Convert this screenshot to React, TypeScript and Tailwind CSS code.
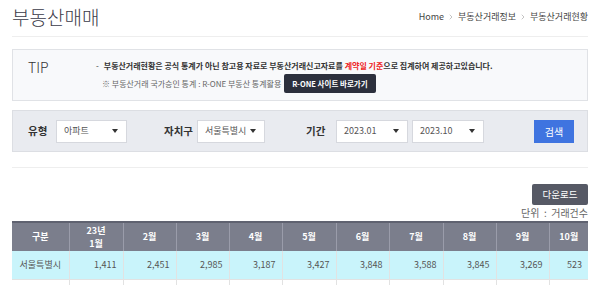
import { ChevronRight } from 'lucide-react';

const months = ['2월', '3월', '4월', '5월', '6월', '7월', '8월', '9월', '10월'];
const values = ['1,411', '2,451', '2,985', '3,187', '3,427', '3,848', '3,588', '3,845', '3,269', '523'];
const colWidths = [57, 54, 53, 53, 53, 54, 53, 54, 53, 53, 39];

const Select = ({ label, width }: { label: string; width: string }) => (
  <div
    className={`${width} h-[23px] bg-white border border-[#d6d8de] flex items-center justify-between pl-[7px] pr-[8px] text-[9px] text-[#555] whitespace-nowrap`}
  >
    <span>{label}</span>
    <span className="w-0 h-0 border-l-[3px] border-r-[3px] border-t-[4px] border-l-transparent border-r-transparent border-t-[#333]" />
  </div>
);

export default function App() {
  return (
    <div
      className="w-[600px] h-[285px] overflow-hidden bg-white px-3"
      style={{ fontFamily: '"Noto Sans CJK KR", "Noto Sans", sans-serif' }}
    >
      {/* Header */}
      <div className="h-[37px] flex items-center justify-between border-b border-[#eeeeee]">
        <h1 className="text-[19px] leading-none text-[#3a3a48] font-light -mt-[3px]">부동산매매</h1>
        <div className="flex items-center gap-[3px] text-[9px] text-[#444] -mt-[2px]">
          <span>Home</span>
          <ChevronRight size={8} strokeWidth={1.5} className="text-[#888]" />
          <span>부동산거래정보</span>
          <ChevronRight size={8} strokeWidth={1.5} className="text-[#888]" />
          <span>부동산거래현황</span>
        </div>
      </div>

      {/* TIP */}
      <div className="mt-[12px] h-[52px] border border-[#e0e2e6] bg-[#f8f9fb] flex">
        <div className="w-[83px] pl-[15px] pt-[4px] text-[14px] text-[#333] leading-none flex items-start">
          <span className="mt-[6px] font-light">TIP</span>
        </div>
        <div className="flex flex-col pt-[10px]">
          <div className="flex items-center text-[8px] font-bold text-[#333] leading-none h-[11px]">
            <span className="mr-[5px] font-normal">-</span>
            <span>
              부동산거래현황은 공식 통계가 아닌 참고용 자료로 부동산거래신고자료를{' '}
              <span className="text-[#ee2222]">계약일 기준</span>으로 집계하여 제공하고있습니다.
            </span>
          </div>
          <div className="flex items-center mt-[3px] pl-[6px]">
            <span className="text-[8px] text-[#666] leading-none">
              ※ 부동산거래 국가승인 통계 : R-ONE 부동산 통계활용
            </span>
            <span className="ml-[3px] h-[19px] px-[8px] bg-[#2c303d] rounded-[2px] text-white text-[7.5px] font-bold flex items-center">
              R-ONE 사이트 바로가기
            </span>
          </div>
        </div>
      </div>

      {/* Filter */}
      <div className="mt-[9px] h-[42px] border border-[#dcdee3] bg-[#e9ebf0] flex items-center pl-[15px]">
        <span className="text-[10.5px] font-bold text-[#333] w-[28px]">유형</span>
        <Select label="아파트" width="w-[71px]" />
        <span className="text-[10.5px] font-bold text-[#333] ml-[37px] w-[33px]">자치구</span>
        <Select label="서울특별시" width="w-[68px]" />
        <span className="text-[10.5px] font-bold text-[#333] ml-[41px] w-[30px]">기간</span>
        <Select label="2023.01" width="w-[72px]" />
        <div className="ml-[4px]" />
        <Select label="2023.10" width="w-[72px]" />
        <div className="ml-[50px] w-[40px] h-[23px] bg-[#3f74e0] text-white text-[10px] flex items-center justify-center">
          검색
        </div>
      </div>

      <div className="mt-[15px] border-t border-[#eeeeee]" />

      {/* Download */}
      <div className="flex justify-end mt-[16px]">
        <div className="w-[56px] h-[21px] bg-[#565965] rounded-[2px] text-white text-[9.5px] flex items-center justify-center">
          다운로드
        </div>
      </div>
      <div className="flex justify-end mt-[1px] h-[14px] items-center text-[10px] text-[#666] leading-none">
        단위 &nbsp;: &nbsp;거래건수
      </div>

      {/* Table */}
      <table className="mt-[1px] border-collapse table-fixed w-[576px] text-[9px]">
        <colgroup>
          {colWidths.map((w, i) => (
            <col key={i} style={{ width: w }} />
          ))}
        </colgroup>
        <thead>
          <tr className="bg-[#7b7e8c] text-white h-[26px]">
            <th className="font-bold border-r border-[#9a9caa] border-t-2 border-t-[#5f6270]">구분</th>
            <th className="font-bold border-r border-[#9a9caa] border-t-2 border-t-[#5f6270] leading-[13px] py-[1px]">
              <div>23년</div>
              <div>1월</div>
            </th>
            {months.map((m, i) => (
              <th
                key={m}
                className={`font-bold border-t-2 border-t-[#5f6270] ${i < months.length - 1 ? 'border-r border-[#9a9caa]' : ''}`}
              >
                {m}
              </th>
            ))}
          </tr>
        </thead>
        <tbody>
          <tr className="bg-[#c9f4fb] h-[28px] text-[#555]">
            <td className="text-center border-r border-[#e2e2e2]">서울특별시</td>
            {values.map((v, i) => (
              <td
                key={i}
                className={`text-right pr-[6px] ${i < values.length - 1 ? 'border-r border-[#e2e2e2]' : ''}`}
              >
                {v}
              </td>
            ))}
          </tr>
          <tr className="h-[28px] border-t border-[#e2e2e2]">
            <td className="border-r border-[#e2e2e2]" />
            {values.map((_, i) => (
              <td key={i} className={i < values.length - 1 ? 'border-r border-[#e2e2e2]' : ''} />
            ))}
          </tr>
        </tbody>
      </table>
    </div>
  );
}
